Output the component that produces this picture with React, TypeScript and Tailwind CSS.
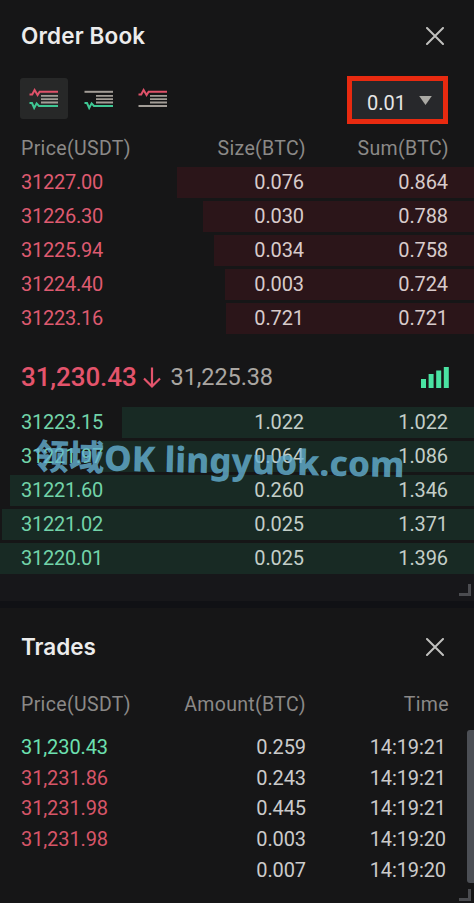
import clsx from 'clsx'

interface BookRow {
  price: string
  size: string
  sum: string
  depth: number
}

interface Trade {
  price: string
  amount: string
  time: string
  side: 'buy' | 'sell'
}

const ASKS: BookRow[] = [
  { price: '31227.00', size: '0.076', sum: '0.864', depth: 297 },
  { price: '31226.30', size: '0.030', sum: '0.788', depth: 271 },
  { price: '31225.94', size: '0.034', sum: '0.758', depth: 260 },
  { price: '31224.40', size: '0.003', sum: '0.724', depth: 249 },
  { price: '31223.16', size: '0.721', sum: '0.721', depth: 248 },
]

const BIDS: BookRow[] = [
  { price: '31223.15', size: '1.022', sum: '1.022', depth: 352 },
  { price: '31221.97', size: '0.064', sum: '1.086', depth: 374 },
  { price: '31221.60', size: '0.260', sum: '1.346', depth: 464 },
  { price: '31221.02', size: '0.025', sum: '1.371', depth: 472 },
  { price: '31220.01', size: '0.025', sum: '1.396', depth: 474 },
]

const TRADES: Trade[] = [
  { price: '31,230.43', amount: '0.259', time: '14:19:21', side: 'buy' },
  { price: '31,231.86', amount: '0.243', time: '14:19:21', side: 'sell' },
  { price: '31,231.98', amount: '0.445', time: '14:19:21', side: 'sell' },
  { price: '31,231.98', amount: '0.003', time: '14:19:20', side: 'sell' },
  { price: '', amount: '0.007', time: '14:19:20', side: 'sell' },
]

const RED = '#e0526a'
const GREEN = '#3fc794'
const GRAY = '#a39d97'

function CloseButton() {
  return (
    <button className="mr-[30px]">
      <svg width="18" height="18" viewBox="0 0 18 18" stroke="#c0c0be" strokeWidth="2" strokeLinecap="round">
        <path d="M1 1L17 17M17 1L1 17" />
      </svg>
    </button>
  )
}

function BookIcon({ asks, bids }: { asks: boolean; bids: boolean }) {
  return (
    <svg width="30" height="22" viewBox="0 0 30 22" fill="none" strokeWidth="2">
      {asks ? (
        <path d="M.5 6.5H3.2L5.6 2L8.6 7L10.6 3.8H29" stroke={RED} />
      ) : (
        <path d="M.5 3.8H29" stroke={GRAY} />
      )}
      <path d="M12 7.8H29M12 11.2H29M12 14.5H29" stroke={GRAY} strokeWidth="1.8" />
      {bids ? (
        <path d="M.5 15H3L5.2 20L7.6 15.4L10 18H29" stroke={GREEN} />
      ) : (
        <path d="M.5 18H29" stroke={GRAY} />
      )}
    </svg>
  )
}

function ResizeHandle() {
  return <span className="block h-3 w-3 border-r-[3px] border-b-[3px] border-[#4b4c50]" />
}

function BookRows({ rows, side }: { rows: BookRow[]; side: 'ask' | 'bid' }) {
  return (
    <div className="flex flex-col gap-[3px]">
      {rows.map(row => (
        <div key={row.price} className="relative h-[31px]">
          <div
            className={clsx('absolute inset-y-0 right-0', side === 'ask' ? 'bg-[#2b1519]' : 'bg-[#182a24]')}
            style={{ width: row.depth }}
          />
          <div
            className={clsx(
              'relative flex h-full items-center pb-[2px] pl-[21px] pr-[26px] text-[20px] tracking-[-0.1px]',
              side === 'ask' ? 'text-[#d8cbcb]' : 'text-[#c3cec8]',
            )}
          >
            <span
              className={clsx(
                'w-[140px] tracking-[-0.25px]',
                side === 'ask' ? 'text-[#de5a70]' : 'text-[#72d3a9]',
              )}
            >
              {row.price}
            </span>
            <span className="w-[143px] text-right">{row.size}</span>
            <span className="flex-1 text-right">{row.sum}</span>
          </div>
        </div>
      ))}
    </div>
  )
}

function ColumnHeads({ middle, last }: { middle: string; last: string }) {
  return (
    <div className="flex h-7 items-center pl-[21px] pr-[25px] text-[19.5px] tracking-[0.35px] text-[#8b8987]">
      <span className="w-[140px]">Price(USDT)</span>
      <span className="w-[145px] text-right">{middle}</span>
      <span className="flex-1 text-right">{last}</span>
    </div>
  )
}

function Watermark() {
  return (
    <div className="pointer-events-none absolute left-[34px] top-[433px] origin-left rotate-[1.3deg] whitespace-nowrap font-['Noto_Sans','Noto_Sans_CJK_SC',sans-serif] text-[35px] leading-[46px] font-extrabold text-[#66b2d4]/80">
      领域OK lingyuok.com
    </div>
  )
}

export default function App() {
  return (
    <div className="relative flex h-[903px] w-[474px] flex-col overflow-hidden bg-[#161617] font-['Roboto',sans-serif]">
      <section className="flex h-[601px] flex-col">
        <header className="flex h-[72px] items-center justify-between pl-[21px]">
          <h2 className="font-['Inter',sans-serif] text-[22.5px] font-semibold tracking-[0.15px] text-[#ececec]">
            Order Book
          </h2>
          <CloseButton />
        </header>

        <div className="flex h-[61px] items-start pt-[4px] pl-5 pr-[26px]">
          <div className="flex flex-1 items-center pt-[2px]">
            <button className="flex h-[41px] w-12 items-center justify-center rounded-[3px] bg-[#272828]">
              <BookIcon asks bids />
            </button>
            <button className="ml-4">
              <BookIcon asks={false} bids />
            </button>
            <button className="ml-6">
              <BookIcon asks bids={false} />
            </button>
          </div>
          <button className="flex h-[48px] w-[101px] items-center border-[5px] border-[#e82a10] bg-[#27282b] pl-[15px] pt-[5px] text-[20px] text-[#e6e6e6]">
            0.01
            <svg className="ml-[13px] -mt-[5px]" width="13" height="9" viewBox="0 0 14 10" fill="#aaa9a4">
              <path d="M0 0H14L7 10Z" />
            </svg>
          </button>
        </div>

        <div className="pt-[2px]">
          <ColumnHeads middle="Size(BTC)" last="Sum(BTC)" />
        </div>
        <div className="pt-[4px]">
          <BookRows rows={ASKS} side="ask" />
        </div>

        <div className="flex h-[73px] items-center pt-[14px] pl-[21px] pr-[25px]">
          <span className="text-[26px] font-medium tracking-[-0.1px] text-[#e4546c]">31,230.43</span>
          <svg
            className="ml-[6px]"
            width="18"
            height="22"
            viewBox="0 0 18 22"
            fill="none"
            stroke="#e4546c"
            strokeWidth="2.2"
          >
            <path d="M9 0.5V19M1 11.5L9 19.5L17 11.5" />
          </svg>
          <span className="ml-[10px] text-[23.5px] tracking-[-0.1px] text-[#aaa6a2]">31,225.38</span>
          <svg className="ml-auto" width="28" height="21" viewBox="0 0 28 21" fill="#4ae3a2">
            <path d="M0 12H5V21H0ZM7.6 7H12.6V21H7.6ZM15.2 3.6H20.2V21H15.2ZM22.8 0H27.8V21H22.8Z" />
          </svg>
        </div>

        <BookRows rows={BIDS} side="bid" />
        <div className="flex flex-1 items-end justify-end bg-[#17171a] pr-[3px] pb-[5px]">
          <ResizeHandle />
        </div>
      </section>

      <div className="h-[7px] bg-[#101115]" />

      <section className="flex flex-1 flex-col">
        <header className="flex h-[78px] items-center justify-between pl-[21px]">
          <h2 className="font-['Inter',sans-serif] text-[22.5px] font-semibold text-[#ececec]">Trades</h2>
          <CloseButton />
        </header>
        <div className="pt-[5px]">
          <ColumnHeads middle="Amount(BTC)" last="Time" />
        </div>
        <div className="flex flex-1 pt-[11px]">
          <div className="flex-1 pt-[2px]">
            {TRADES.map((trade, i) => (
              <div key={i} className="flex h-[30.6px] items-center pl-[21px] text-[20px] tracking-[-0.1px] text-[#cbcbcb]">
                <span className={clsx('w-[140px]', trade.side === 'buy' ? 'text-[#6ce0b0]' : 'text-[#d75568]')}>
                  {trade.price}
                </span>
                <span className="w-[145px] text-right">{trade.amount}</span>
                <span className="w-[140px] text-right">{trade.time}</span>
              </div>
            ))}
          </div>
          <div className="flex w-[15px] flex-col items-end">
            <div className="h-[153px] w-[7px] rounded-l-[3px] bg-[#4c4f55]" />
            <div className="mt-[6px] mr-[3px]">
              <ResizeHandle />
            </div>
          </div>
        </div>
      </section>

      <Watermark />
    </div>
  )
}
